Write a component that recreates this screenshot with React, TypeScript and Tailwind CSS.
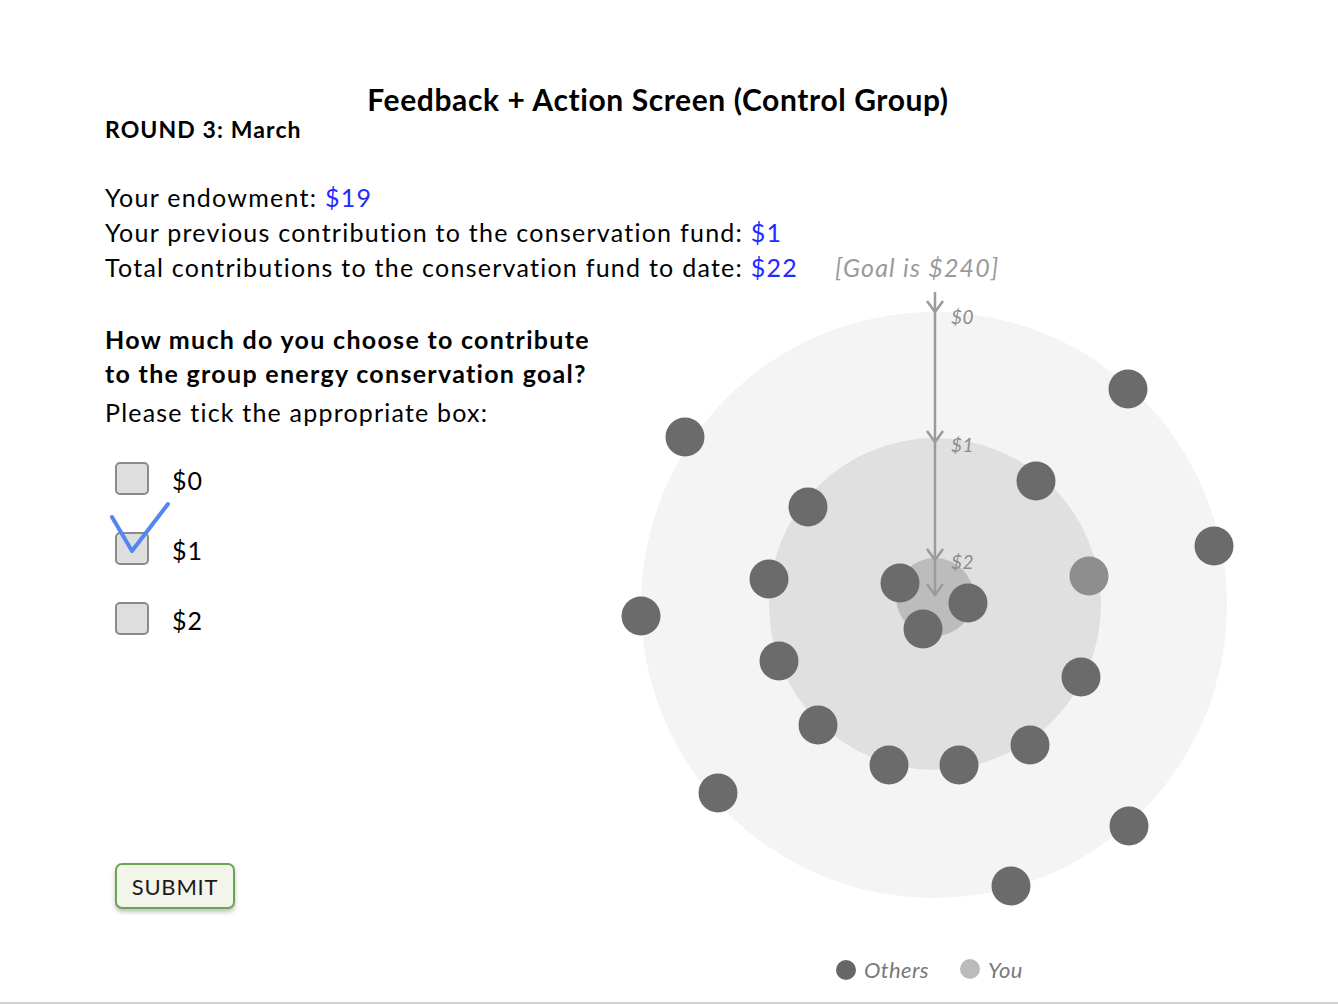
import React from 'react';

const OX = 620;
const OY = 250;

const others: [number, number][] = [
  [1128, 389], [685, 437], [1214, 546], [641, 616], [718, 793], [1129, 826], [1011, 886],
  [808, 507], [1036, 481], [769, 579], [779, 661], [818, 725], [889, 765], [959, 765],
  [1030, 745], [1081, 677],
  [900, 583], [968, 603], [923, 629],
];

const you: [number, number] = [1089, 576];

const arrowTips = [312, 442, 560, 595];

const amounts = [
  { label: '$0', y: 324 },
  { label: '$1', y: 452 },
  { label: '$2', y: 569 },
];

const options = ['$0', '$1', '$2'];

const Chart = () => {
  return (
    <svg width={620} height={745} viewBox="0 0 620 745" className="shrink-0">
      <circle cx={934 - OX} cy={605 - OY} r={293} fill="#f4f4f4" />
      <circle cx={935 - OX} cy={604 - OY} r={166} fill="#e0e0e0" />
      <circle cx={935 - OX} cy={597 - OY} r={39} fill="#bcbcbc" />

      <line x1={935 - OX} y1={292 - OY} x2={935 - OX} y2={596 - OY} stroke="#9b9b9b" strokeWidth={2.5} />
      {arrowTips.map(t => (
        <polyline
          key={t}
          points={`${927 - OX},${t - 11 - OY} ${935 - OX},${t - OY} ${943 - OX},${t - 11 - OY}`}
          fill="none"
          stroke="#9b9b9b"
          strokeWidth={2.5}
        />
      ))}

      <g fontFamily="Lato, sans-serif" fontStyle="italic" fill="#8c8c8c" fontSize={19}>
        {amounts.map(a => (
          <text key={a.label} x={951 - OX} y={a.y - OY} letterSpacing={0.4}>{a.label}</text>
        ))}
      </g>

      <text
        x={835 - OX}
        y={277 - OY}
        fontFamily="Lato, sans-serif"
        fontStyle="italic"
        fontSize={25}
        letterSpacing={1.2}
        fill="#9a9a9a"
      >
        [Goal is $240]
      </text>

      {others.map(([x, y], i) => (
        <circle key={i} cx={x - OX} cy={y - OY} r={19.5} fill="#6b6b6b" />
      ))}
      <circle cx={you[0] - OX} cy={you[1] - OY} r={19.5} fill="#8e8e8e" />

      <g fontFamily="Lato, sans-serif" fontStyle="italic" fontSize={22} fill="#7a7a7a" letterSpacing={0.4}>
        <circle cx={846 - OX} cy={970 - OY} r={10} fill="#666666" />
        <text x={864 - OX} y={978 - OY}>Others</text>
        <circle cx={970 - OX} cy={969 - OY} r={10} fill="#bbbbbb" />
        <text x={988 - OX} y={978 - OY}>You</text>
      </g>
    </svg>
  );
};

const App = () => {
  return (
    <div className="w-full h-[1004px] bg-white border-b-2 border-[#d2d2d2] font-[Lato,sans-serif] text-black overflow-hidden">
      <div className="pt-[82px] flex justify-center pr-[22px]">
        <h1 className="text-[30px] leading-[34px] font-bold tracking-[0.6px]">Feedback + Action Screen (Control Group)</h1>
      </div>
      <div className="pl-[105px] text-[23px] leading-[28px] font-bold tracking-[1.1px] -mt-[1px]">ROUND 3: March</div>

      <div className="flex items-start">
        <div className="w-[620px] shrink-0 pl-[105px] pt-[37px] whitespace-nowrap">
          <div className="text-[25px] leading-[35px] tracking-[1.25px]">
            <p>Your endowment: <span className="text-[#1f2bff]">$19</span></p>
            <p>Your previous contribution to the conservation fund: <span className="text-[#1f2bff]">$1</span></p>
            <p>Total contributions to the conservation fund to date: <span className="text-[#1f2bff]">$22</span></p>
          </div>

          <div className="mt-[37px] text-[25px] font-bold leading-[34px] tracking-[1.3px]">
            <p>How much do you choose to contribute</p>
            <p>to the group energy conservation goal?</p>
          </div>
          <p className="text-[25px] leading-[38px] tracking-[1.2px] mt-[3px]">Please tick the appropriate box:</p>

          <div className="mt-[31px] flex flex-col gap-[37px] pl-[10px]">
            {options.map((o, i) => (
              <div key={o} className="flex items-center gap-[23px] h-[33px] relative">
                <div className="w-[34px] h-[33px] rounded-[5px] border-2 border-[#8a8a8a] bg-[#dedede]" />
                <span className="text-[25px] leading-none tracking-[1px] pt-[4px]">{o}</span>
                {i === 1 && (
                  <svg
                    width={70}
                    height={60}
                    viewBox="0 0 70 60"
                    className="absolute left-[-8px] top-[-34px]"
                  >
                    <polyline
                      points="5,19 25,53 61,6"
                      fill="none"
                      stroke="#5585ee"
                      strokeWidth={4}
                      strokeLinecap="round"
                      strokeLinejoin="round"
                    />
                  </svg>
                )}
              </div>
            ))}
          </div>

          <button className="mt-[228px] ml-[10px] w-[120px] h-[46px] rounded-[7px] border-2 border-[#6aa650] bg-[#f3f4ea] shadow-[0_3px_4px_rgba(0,0,0,0.25)] text-[22px] tracking-[0.8px] text-[#1a1a1a]">
            SUBMIT
          </button>
        </div>

        <div className="pt-[107px]">
          <Chart />
        </div>
      </div>
    </div>
  );
};

export default App;
